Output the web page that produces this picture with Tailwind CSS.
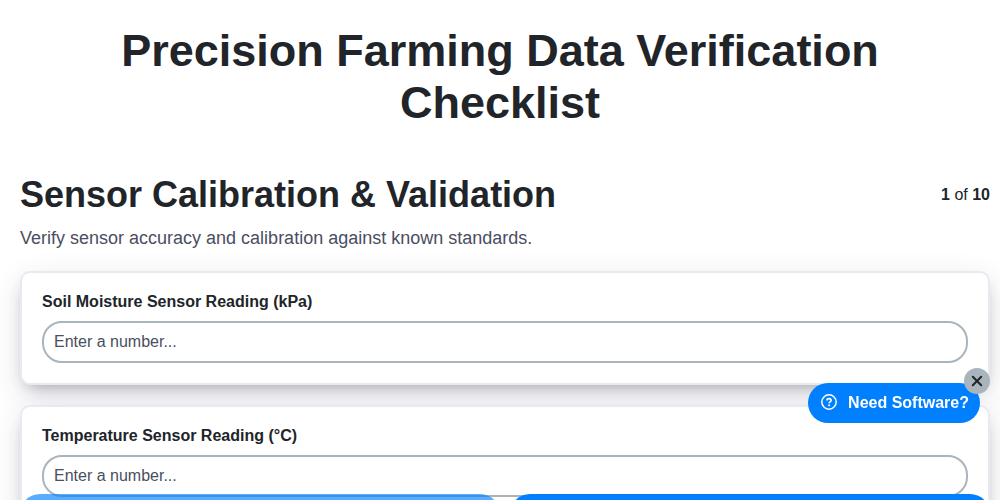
<!DOCTYPE html>
<html lang="en">
<head>
    <meta charset="UTF-8">
    <meta name="viewport" content="width=device-width, initial-scale=1.0">
    <title>Precision Farming Data Verification Checklist</title>
    <script src="https://cdn.jsdelivr.net/npm/@tailwindcss/browser@4"></script>
</head>
<body class="h-screen overflow-hidden bg-white text-[#212529] font-['Liberation_Sans',Arial,sans-serif]">
    <h1 class="px-20 pt-[25px] text-center text-[45px] leading-[52px] font-bold">Precision Farming Data Verification Checklist</h1>

    <main class="pt-11 pr-[10px] pl-5">
        <!-- Section header -->
        <div class="flex items-center justify-between">
            <h2 class="text-[36px] leading-[44px] font-bold">Sensor Calibration &amp; Validation</h2>
            <span class="text-base"><b>1</b> of <b>10</b></span>
        </div>
        <p class="mt-[7px] text-lg leading-7 text-[#4a4e61]">Verify sensor accuracy and calibration against known standards.</p>

        <!-- Fields -->
        <form class="mt-[19px] flex flex-col gap-5">
            <div class="rounded-[10px] border-2 border-[#e9e9f0] bg-white p-5 shadow-[0_10px_30px_rgba(50,50,93,0.15),0_8px_16px_-8px_rgba(0,0,0,0.35)]">
                <label for="soil" class="mb-[10px] block text-base leading-[18px] font-bold">Soil Moisture Sensor Reading (kPa)</label>
                <input id="soil" type="number" placeholder="Enter a number..." class="block h-[42px] w-full rounded-[20px] border-2 border-[#a9b4bd] bg-white px-[10px] text-base placeholder:text-[#4a4e61]">
            </div>
            <div class="rounded-[10px] border-2 border-[#e9e9f0] bg-white p-5 shadow-[0_10px_30px_rgba(50,50,93,0.15),0_8px_16px_-8px_rgba(0,0,0,0.35)]">
                <label for="temp" class="mb-[10px] block text-base leading-[18px] font-bold">Temperature Sensor Reading (°C)</label>
                <input id="temp" type="number" placeholder="Enter a number..." class="block h-[42px] w-full rounded-[20px] border-2 border-[#a9b4bd] bg-white px-[10px] text-base placeholder:text-[#4a4e61]">
            </div>
        </form>
    </main>

    <!-- Step navigation -->
    <nav class="fixed right-[10px] -bottom-[34px] left-5 grid grid-cols-2 gap-[10px]">
        <button type="button" aria-label="Previous" disabled class="h-10 rounded-[20px] bg-[#007fff] opacity-65"></button>
        <button type="button" aria-label="Next" class="h-10 rounded-[20px] bg-[#007fff]"></button>
    </nav>

    <!-- Help widget -->
    <div class="fixed right-5 bottom-[77px]">
        <a href="#" class="flex h-10 w-[172px] items-center justify-between rounded-[20px] bg-[#007fff] pr-[11px] pl-[13px] font-bold whitespace-nowrap text-white">
            <svg class="mb-0.5 size-4 shrink-0" viewBox="0 0 16 16" fill="none" stroke="currentColor" aria-hidden="true">
                <circle cx="8" cy="8" r="7.2" stroke-width="1.5"/>
                <path d="M5.9 6.5C5.9 5.3 6.8 4.6 8 4.6s2.1.7 2.1 1.8c0 1.4-2 1.5-2 2.9" stroke-width="1.6"/>
                <circle cx="8.1" cy="11.3" r="1" fill="currentColor" stroke="none"/>
            </svg>
            Need Software?
        </a>
        <button type="button" aria-label="Close" class="absolute -top-[15px] -right-[10px] flex size-[26px] items-center justify-center rounded-full bg-[#a9b4bd]">
            <svg class="size-3" viewBox="0 0 12 12" fill="none" stroke="#212529" stroke-width="2" stroke-linecap="round" aria-hidden="true">
                <path d="M1.8 1.8l8.4 8.4M10.2 1.8l-8.4 8.4"/>
            </svg>
        </button>
    </div>
</body>
</html>
